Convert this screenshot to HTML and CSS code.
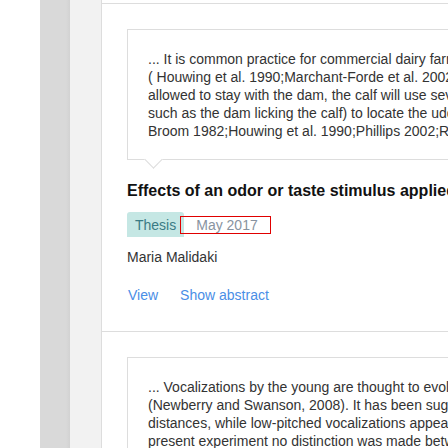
FILE: index.html
```html
<!DOCTYPE html>
<html>
<head>
<meta charset="utf-8">
<link rel="stylesheet" href="styles.css">
</head>
<body>
<div class="page">
  <div class="gutter"></div>
  <div class="rail"></div>
  <div class="side"></div>
  <div class="main">
    <div class="prev-card"></div>
    <div class="item">
      <div class="quote">
        <p class="quote-text">... It is common practice for commercial dairy farmers to separate the calf from the dam shortly after birth<br>( Houwing et al. 1990;Marchant-Forde et al. 2002;Weary and Chua 2000). When a calf is<br>allowed to stay with the dam, the calf will use several cues (e.g. visual, tactile and olfactory<br>such as the dam licking the calf) to locate the udder and initiate suckling<br>Broom 1982;Houwing et al. 1990;Phillips 2002;Rushen et al. 2008) ...</p>
      </div>
      <h2 class="title">Effects of an odor or taste stimulus applied to an artificial teat</h2>
      <div class="meta">
        <span class="tag">Thesis</span>
        <span class="date">May 2017</span>
      </div>
      <div class="author">Maria Malidaki</div>
      <div class="links">
        <a class="link">View</a>
        <a class="link">Show abstract</a>
      </div>
    </div>
    <div class="item">
      <div class="quote">
        <p class="quote-text">... Vocalizations by the young are thought to evolve to attract the attention of the mother<br>(Newberry and Swanson, 2008). It has been suggested that high-pitched calls carry over long<br>distances, while low-pitched vocalizations appear to be used when the dam is nearby. In the<br>present experiment no distinction was made between the types of vocalizations ...</p>
      </div>
    </div>
  </div>
</div>
</body>
</html>
```
FILE: styles.css
```css
html, body {
  margin: 0;
  padding: 0;
  background: #ffffff;
}

body {
  font-family: "Liberation Sans", Arial, sans-serif;
  color: #333333;
}

.page {
  display: flex;
  width: 448px;
  height: 448px;
  overflow: hidden;
}

.gutter {
  flex: none;
  width: 40px;
  background: #ffffff;
}

.rail {
  flex: none;
  width: 30px;
  background: linear-gradient(to right, #d9d9d9 0, #d9d9d9 26px, #d2d2d2 30px);
}

.side {
  flex: none;
  width: 31px;
  background: #f2f2f2;
}

.main {
  flex: none;
  width: 720px;
  background: #ffffff;
  border-left: 1px solid #dddddd;
}

.prev-card {
  height: 3px;
  border-bottom: 1px solid #dddddd;
}

.item {
  padding: 25px 25px 27px 25px;
  border-bottom: 1px solid #dddddd;
}

.quote {
  position: relative;
  border: 1px solid #dddddd;
  background: #ffffff;
  padding: 20px 20px 19px 20px;
}

.quote::after {
  content: "";
  position: absolute;
  left: 19px;
  bottom: -7px;
  width: 12px;
  height: 12px;
  background: #ffffff;
  border-right: 1px solid #dddddd;
  border-bottom: 1px solid #dddddd;
  transform: rotate(45deg);
}

.quote-text {
  margin: 0;
  font-size: 14px;
  line-height: 18px;
  color: #333333;
  white-space: nowrap;
}

.title {
  margin: 21px 0 0 0;
  font-size: 16px;
  line-height: 20px;
  font-weight: bold;
  color: #111111;
  white-space: nowrap;
}

.meta {
  display: flex;
  align-items: center;
  margin-top: 11px;
  height: 25px;
}

.tag {
  display: flex;
  align-items: center;
  height: 25px;
  padding: 0 8px;
  border-radius: 3px 3px 0 0;
  background: #c5e7e4;
  color: #3a7b84;
  font-size: 14px;
}

.date {
  display: flex;
  align-items: center;
  box-sizing: border-box;
  height: 18px;
  width: 91px;
  margin-left: -4px;
  padding-left: 15px;
  border: 1px solid #e00000;
  color: #8893a0;
  font-size: 14px;
}

.author {
  margin-top: 11px;
  font-size: 14px;
  line-height: 18px;
  color: #333333;
}

.links {
  display: flex;
  gap: 22px;
  margin-top: 20px;
  font-size: 14px;
  line-height: 18px;
  padding-left: 1px;
}

.link {
  color: #4a8ee6;
  text-decoration: none;
}
```
